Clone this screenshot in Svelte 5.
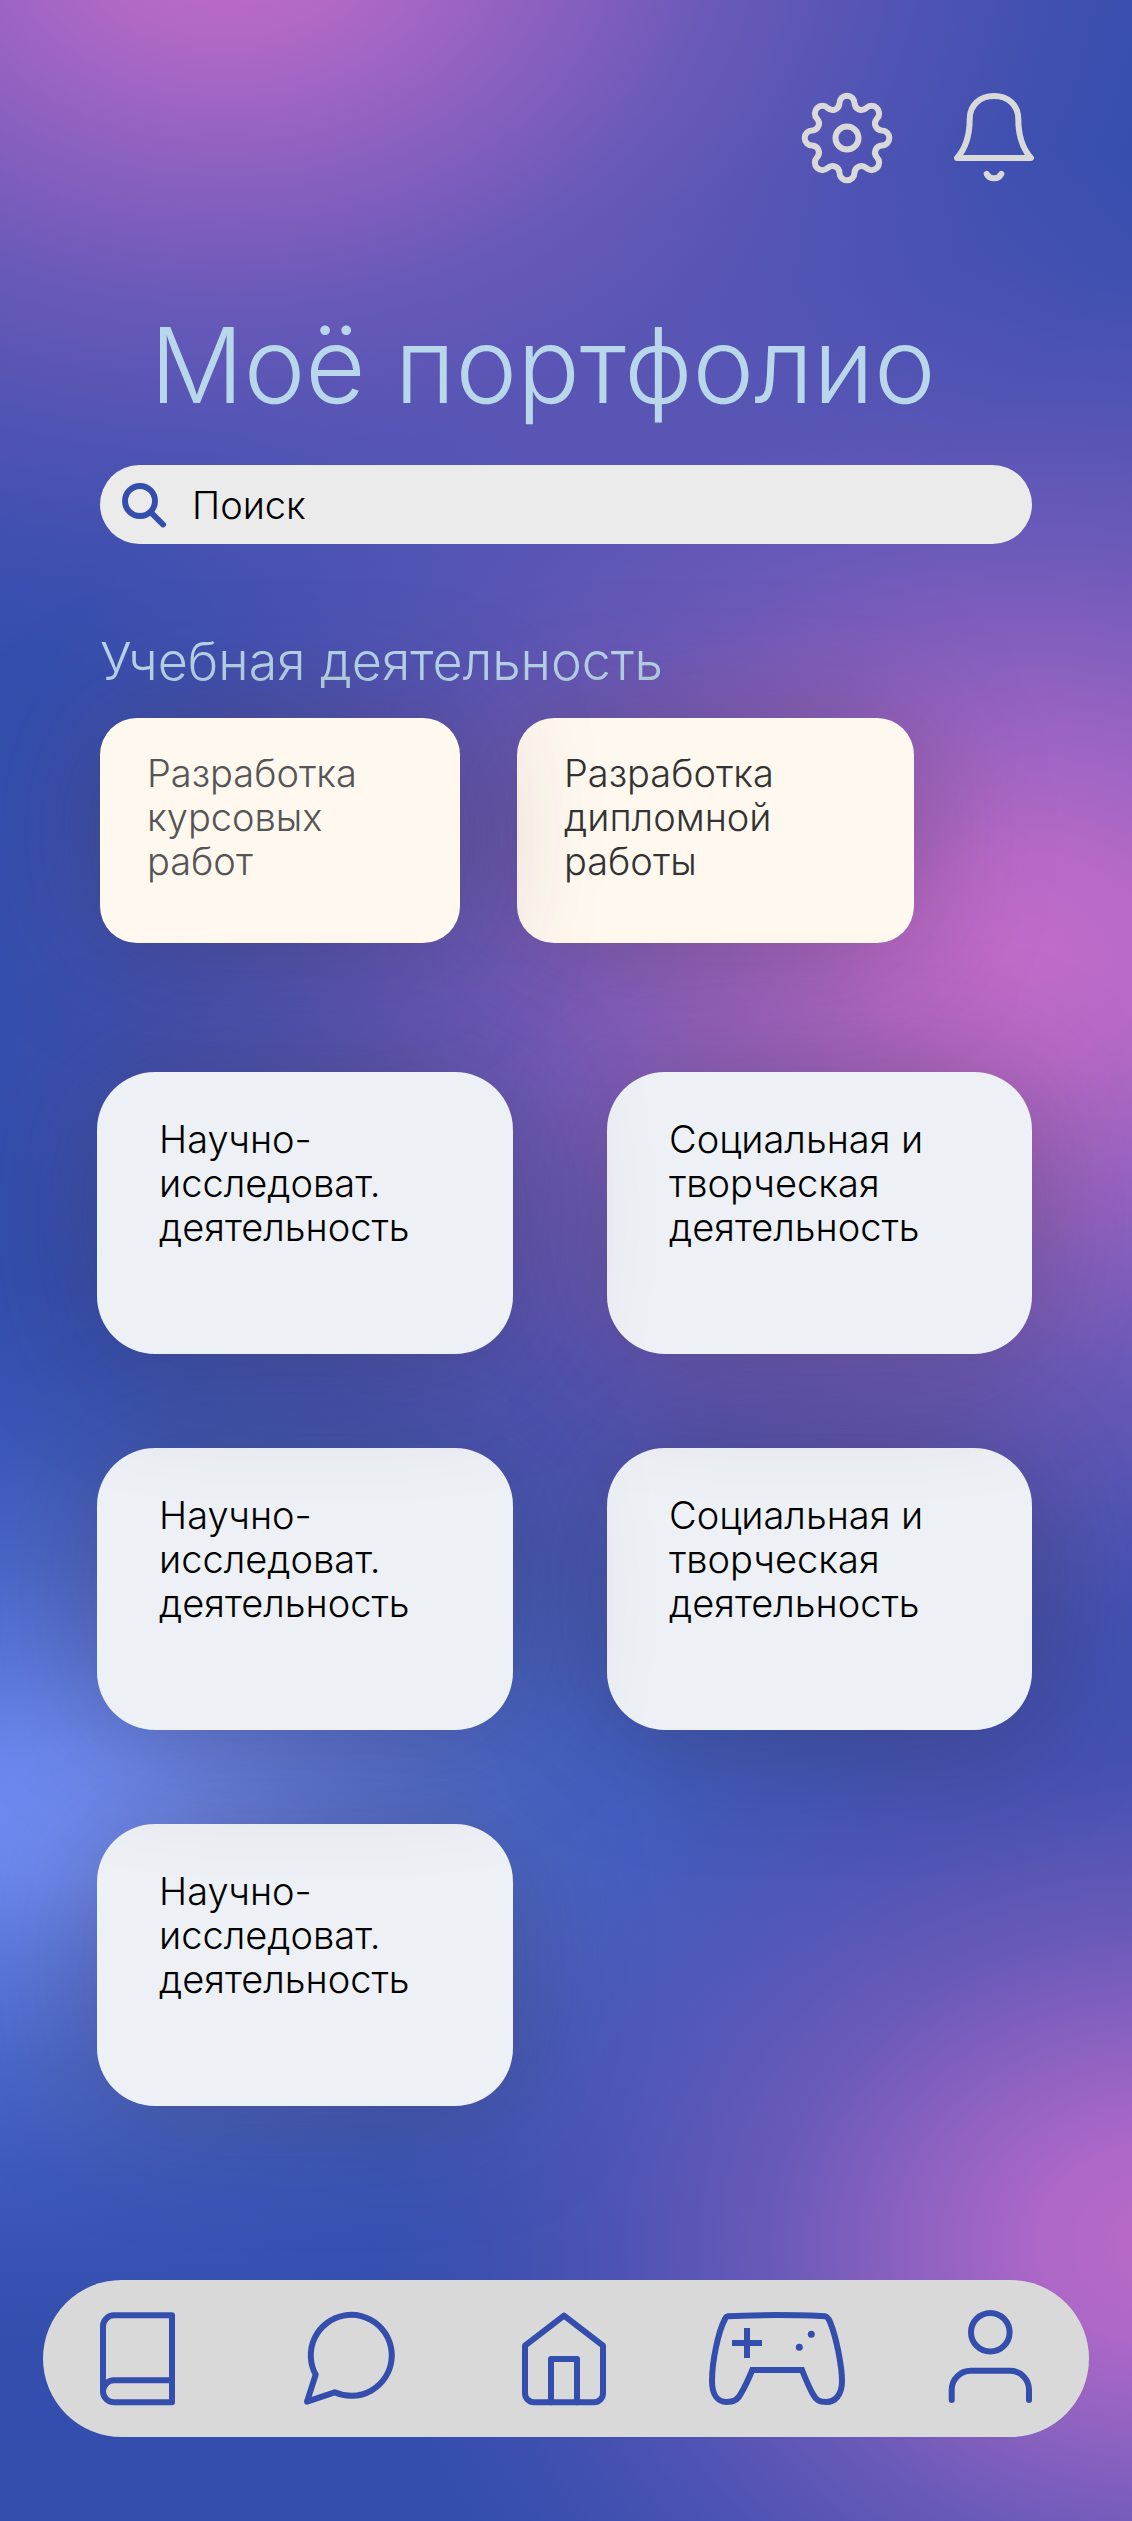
<script>
  const studyCards = [
    { text: 'Разработка\nкурсовых\nработ', tone: 'muted' },
    { text: 'Разработка\nдипломной\nработы', tone: 'dark' }
  ];

  const research = 'Научно-\nисследоват.\nдеятельность';
  const social = 'Социальная и\nтворческая\nдеятельность';
  const activityCards = [research, social, research, social, research];

  // Gear outline: eight round teeth joined by round valleys, all arcs tangent.
  function gearPath(cx, cy) {
    const tooth = { dist: 34.5, r: 7.5 };
    const valley = { dist: 38, r: 7 };
    const at = (dist, deg) => {
      const a = (deg * Math.PI) / 180;
      return [cx + dist * Math.sin(a), cy - dist * Math.cos(a)];
    };
    const touch = (t, v) => {
      const k = tooth.r / (tooth.r + valley.r);
      return [t[0] + (v[0] - t[0]) * k, t[1] + (v[1] - t[1]) * k];
    };
    const fmt = (p) => `${p[0].toFixed(2)} ${p[1].toFixed(2)}`;
    let d = '';
    for (let i = 0; i < 8; i++) {
      const deg = i * 45;
      const t = at(tooth.dist, deg);
      const before = touch(t, at(valley.dist, deg - 22.5));
      const after = touch(t, at(valley.dist, deg + 22.5));
      d += i === 0 ? `M${fmt(before)}` : `A${valley.r} ${valley.r} 0 0 0 ${fmt(before)}`;
      d += `A${tooth.r} ${tooth.r} 0 0 1 ${fmt(after)}`;
    }
    const first = touch(at(tooth.dist, 0), at(valley.dist, -22.5));
    return `${d}A${valley.r} ${valley.r} 0 0 0 ${fmt(first)}Z`;
  }
</script>

<div class="page">
  <header class="actions">
    <button type="button" aria-label="Настройки">
      <svg width="90" height="90" viewBox="0 0 90 90">
        <path d={gearPath(45, 45)} />
        <circle cx="45" cy="45" r="11.5" />
      </svg>
    </button>
    <button type="button" aria-label="Уведомления">
      <svg width="80" height="90" viewBox="0 0 80 90">
        <path d="M3 65C12 55 15.7 42 15.7 26C15.7 12 26 3 40 3C54 3 64.3 12 64.3 26C64.3 42 68 55 77 65Z" />
        <path d="M32.7 81Q35 85.3 40 85.3Q45 85.3 47.3 81" />
      </svg>
    </button>
  </header>

  <main>
    <h1>Моё портфолио</h1>

    <label class="search">
      <svg width="44" height="44" viewBox="0 0 44 44" aria-hidden="true">
        <circle cx="18" cy="18" r="15" />
        <path d="M29 29.5L41 41.5" />
      </svg>
      <input type="search" placeholder="Поиск" aria-label="Поиск" />
    </label>

    <h2>Учебная деятельность</h2>
    <div class="study">
      {#each studyCards as card, i}
        <a class="card {card.tone}" href="#study" style:z-index={studyCards.length - i}>{card.text}</a>
      {/each}
    </div>

    <div class="activities">
      {#each activityCards as text, i}
        <a class="card" href="#activity" style:z-index={activityCards.length - i}>{text}</a>
      {/each}
    </div>
  </main>

  <nav>
    <button type="button" aria-label="Зачётная книжка">
      <svg width="75" height="94" viewBox="0 0 75 94">
        <path d="M72 3.3V90.3H14A11 11 0 0 1 3 79.3V14.3A11 11 0 0 1 14 3.3Z" />
        <path d="M3 79.3A11 11 0 0 1 14 68.3H72" />
      </svg>
    </button>
    <button type="button" aria-label="Сообщения">
      <svg width="92" height="94" viewBox="0 0 92 94">
        <path d="M11.7 62.7A40.5 40.5 0 1 1 30.7 80.3L3 89.7Z" />
      </svg>
    </button>
    <button type="button" aria-label="Главная">
      <svg width="84" height="94" viewBox="0 0 84 94">
        <path d="M42 3.7L81 33.7V81.3A9 9 0 0 1 72 90.3H12A9 9 0 0 1 3 81.3V33.7Z" />
        <path d="M29 90.3V47H55V90.3" />
      </svg>
    </button>
    <button type="button" aria-label="Игры">
      <svg class="pad" width="136" height="94" viewBox="0 0 136 94">
        <path d="M19 4.3C40 2.7 95 2.7 116 4.3C118.5 4.6 119.5 6.5 121 10C127 24 133 54 133 69C133 83 126 90 117.5 90C110 90 107 88 103.5 81.5Q99 73 93 58H43.3Q37 73 32 81.5C28.5 88 25 90 17.5 90C9 90 3 83 3 69C3 50 9 20 16 7C17 5 17.5 4.5 19 4.3Z" />
        <path d="M38 16V46M23 31H53" />
        <circle class="dot" cx="102.3" cy="22.3" r="3.5" />
        <circle class="dot" cx="90.3" cy="35.3" r="3.5" />
      </svg>
    </button>
    <button type="button" aria-label="Профиль">
      <svg width="84" height="94" viewBox="0 0 84 94">
        <circle cx="42.3" cy="20.3" r="19.3" />
        <path d="M3.7 88V77.7A19 19 0 0 1 22.7 58.7H62A19 19 0 0 1 81 77.7V88" />
      </svg>
    </button>
  </nav>
</div>

<style>
  :global(body) {
    margin: 0;
  }

  .page {
    box-sizing: border-box;
    min-height: 100vh;
    padding-bottom: 84px;
    display: flex;
    flex-direction: column;
    overflow: hidden;
    font-family: Inter, 'Open Sans', sans-serif;
    font-weight: 300;
    background:
      radial-gradient(ellipse 88% 30% at 20% -3%, rgb(196 108 202) 0%, rgb(194 108 202 / 88%) 15%, rgb(184 106 200 / 68%) 32%, rgb(174 104 198 / 44%) 50%, rgb(164 100 196 / 24%) 70%, rgb(156 98 196 / 9%) 86%, rgb(150 96 196 / 0%) 100%),
      radial-gradient(ellipse 92% 32% at 90% 38%, rgb(194 108 202) 0%, rgb(194 108 202 / 92%) 13%, rgb(184 106 200 / 72%) 32%, rgb(174 104 198 / 48%) 50%, rgb(164 100 196 / 26%) 70%, rgb(156 98 196 / 10%) 86%, rgb(150 96 196 / 0%) 100%),
      radial-gradient(ellipse 70% 25% at 103% 89%, rgb(186 106 202) 0%, rgb(186 106 202 / 90%) 16%, rgb(178 106 200 / 68%) 34%, rgb(172 104 198 / 44%) 50%, rgb(164 100 196 / 22%) 70%, rgb(156 98 196 / 8%) 86%, rgb(150 96 196 / 0%) 100%),
      radial-gradient(ellipse 82% 21% at 6% 72%, rgb(112 140 242) 0%, rgb(112 140 242 / 94%) 12%, rgb(108 138 240 / 70%) 28%, rgb(102 134 232 / 44%) 48%, rgb(96 130 228 / 22%) 68%, rgb(92 124 224 / 8%) 86%, rgb(90 120 220 / 0%) 100%),
      #344eae;
  }

  button {
    padding: 0;
    border: 0;
    background: none;
    cursor: pointer;
  }

  svg {
    display: block;
    overflow: visible;
    fill: none;
    stroke: #344eae;
    stroke-width: 6px;
    stroke-linecap: round;
    stroke-linejoin: round;
  }

  .actions {
    display: flex;
    justify-content: flex-end;
    gap: 62px;
    padding: 93px 98px 0;
  }

  .actions svg {
    stroke: #d9d9d9;
  }

  main {
    padding: 0 100px;
  }

  h1,
  h2 {
    margin: 0;
    color: #b9d7ea;
    font-weight: 300;
    white-space: nowrap;
  }

  h1 {
    padding-left: 50px;
    margin-top: 122px;
    font-size: 104px;
    line-height: 120px;
  }

  .search {
    display: flex;
    align-items: center;
    gap: 26px;
    height: 79px;
    margin-top: 40px;
    padding: 0 22px;
    border-radius: 40px;
    background: #ebebeb;
  }

  input {
    flex: 1;
    min-width: 0;
    padding: 0;
    border: 0;
    outline: 0;
    background: none;
    font: inherit;
    font-size: 38px;
    color: #000;
  }

  input::placeholder {
    color: #000;
    opacity: 1;
  }

  h2 {
    margin-top: 88px;
    font-size: 52px;
    line-height: 60px;
  }

  .card {
    position: relative;
    box-sizing: border-box;
    color: #000;
    font-size: 38px;
    line-height: 44px;
    white-space: pre-line;
    text-decoration: none;
    box-shadow: 0 4px 130px rgb(62 46 56 / 36%);
  }

  .study {
    display: grid;
    grid-template-columns: 360fr 397fr;
    gap: 57px;
    margin: 26px 118px 0 0;
  }

  .study .card {
    min-height: 225px;
    padding: 33px 40px 33px 47px;
    border-radius: 37px;
    background: #fff8ef;
  }

  .study .muted {
    color: #555;
  }

  .study .dark {
    color: #333;
  }

  .activities {
    display: grid;
    grid-template-columns: 416fr 425fr;
    gap: 94px;
    margin: 129px 0 0 -3px;
  }

  .activities .card {
    min-height: 282px;
    padding: 45px 20px 45px 62px;
    border-radius: 58px;
    background: #edf0f5;
  }

  nav {
    display: flex;
    justify-content: space-between;
    align-items: center;
    height: 157px;
    margin: 174px 43px 0;
    padding: 0 31px 0 26px;
    border-radius: 79px;
    background: #d9d9d9;
  }

  nav button {
    width: 136px;
    display: flex;
    justify-content: center;
  }

  .pad {
    stroke-linecap: butt;
    stroke-linejoin: miter;
  }

  .dot {
    fill: #344eae;
    stroke: none;
  }
</style>
